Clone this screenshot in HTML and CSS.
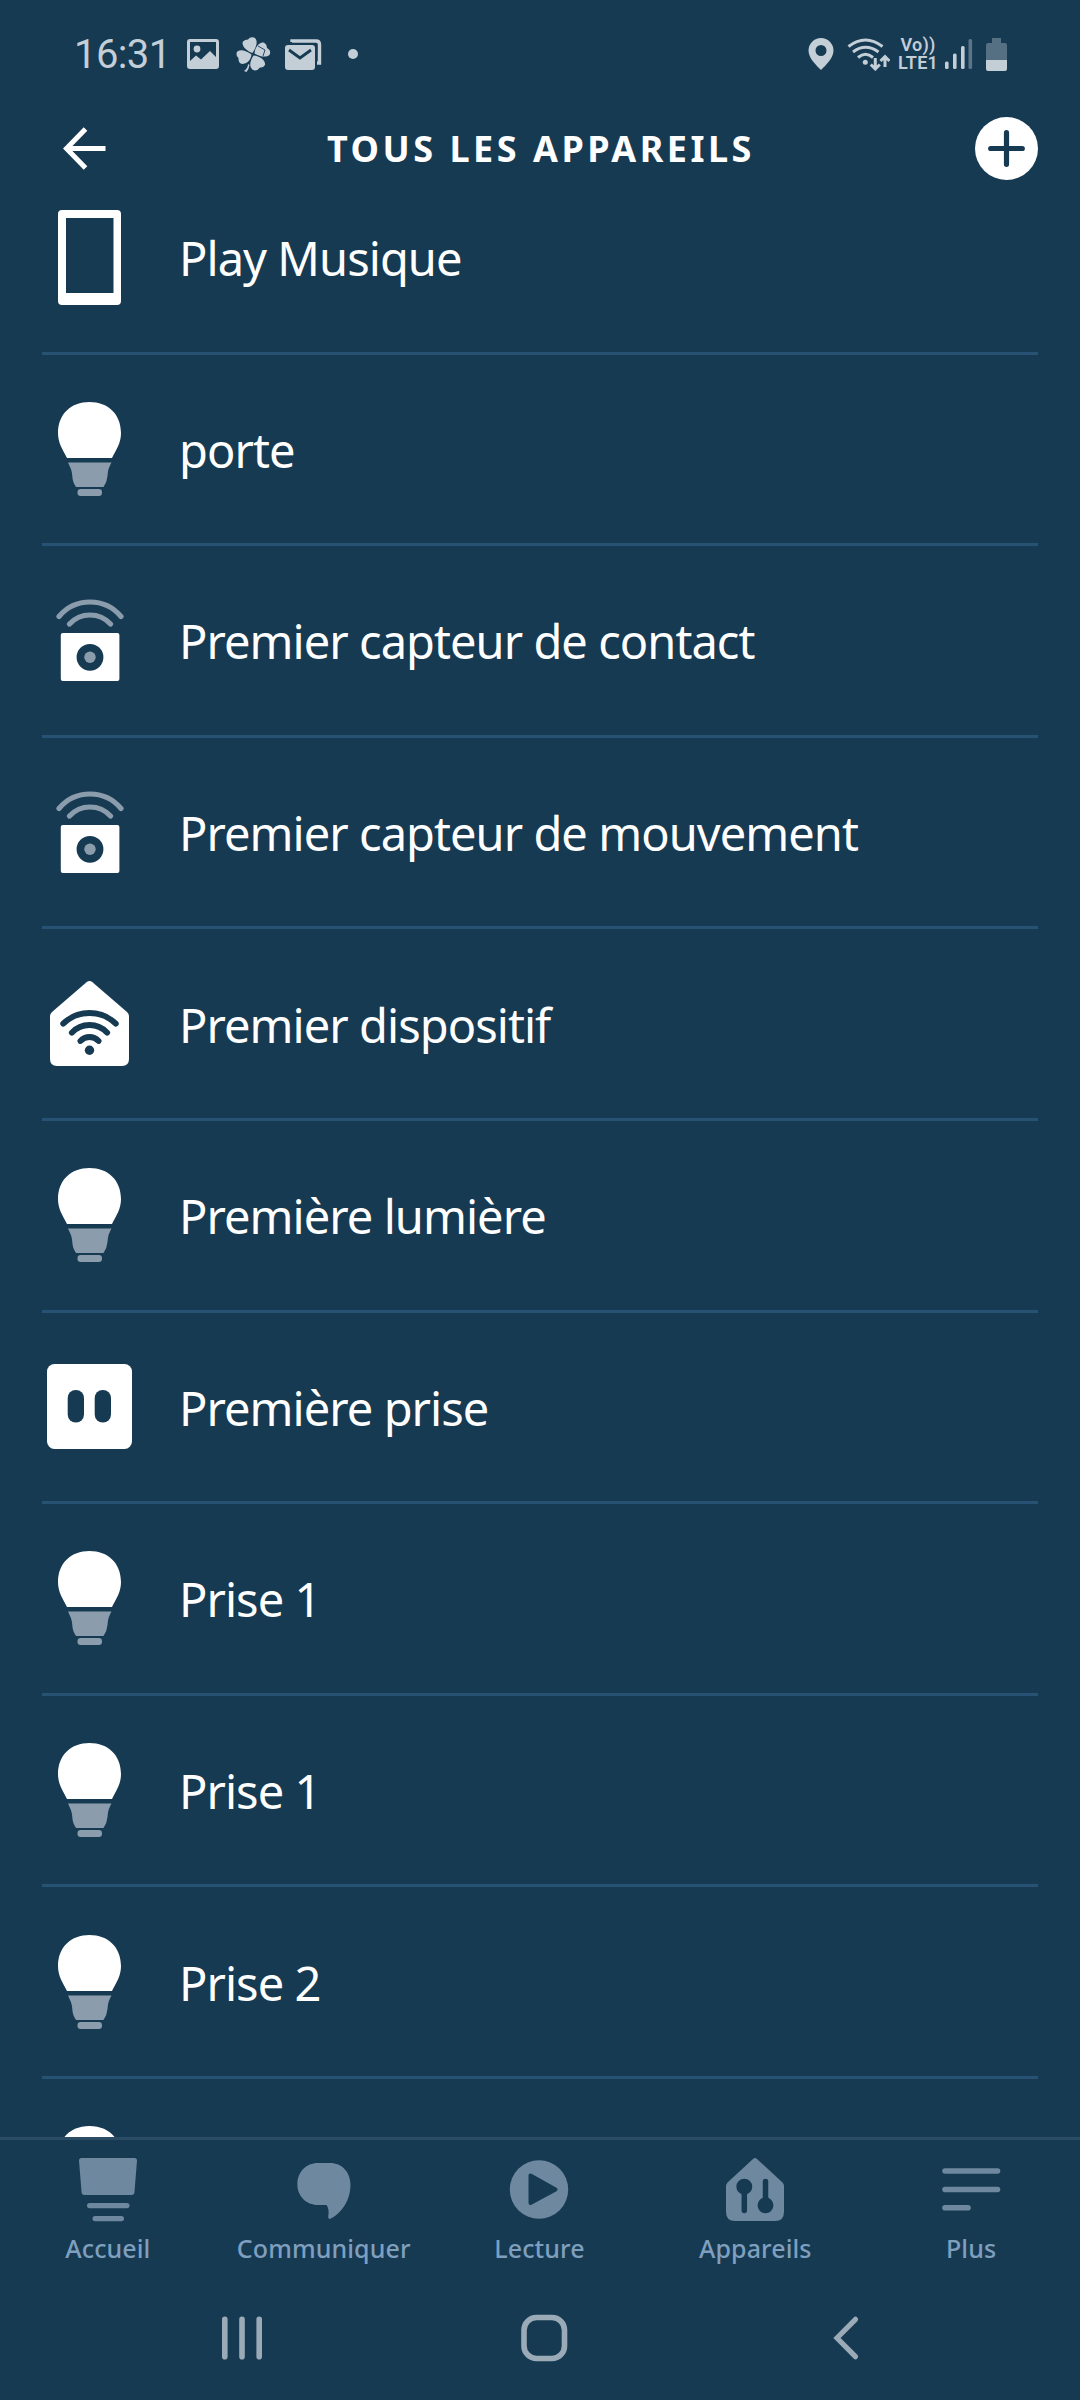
FILE: index.html
```
<!DOCTYPE html>
<html lang="fr">
  <head>
    <meta charset="UTF-8" />
    <meta name="viewport" content="width=device-width, initial-scale=1.0" />
    <title>Tous les appareils</title>
    <link rel="stylesheet" href="styles.css" />
  </head>
  <body>
    <!-- Shared device icons -->
    <svg class="sprite" width="0" height="0">
      <symbol id="bulb" viewBox="0 0 63 94">
        <path fill="#fff" d="M31.500 0C50 0 63 12 63 31C63 41 58.500 47 54 56H9C4.500 47 0 41 0 31C0 12 13 0 31.500 0Z" />
        <path fill="#8b9dac" d="M10 60.500H53.500C50 67 50 69 49.500 74Q49 80 45.500 85H18Q14.500 80 14.300 74C14 69 13 67 10 60.500Z" />
        <rect fill="#8b9dac" x="19.500" y="87" width="24.500" height="7" rx="3.200" />
      </symbol>
      <symbol id="sensor" viewBox="0 0 68 82">
        <g fill="none" stroke="#8b9dac" stroke-width="5.200" stroke-linecap="round">
          <path d="M3 17.500A40.400 40.400 0 0 1 65 17.500" />
          <path d="M13.500 25A27.800 27.800 0 0 1 54.500 25" />
        </g>
        <rect fill="#fff" x="4.800" y="34" width="58.600" height="48" rx="2" />
        <circle fill="#173a53" cx="34" cy="58.300" r="13.400" />
        <circle fill="#8b9dac" cx="34" cy="58.300" r="5.700" />
      </symbol>
    </svg>

    <div class="phone">
      <div class="status-bar">
        <div class="status-left">
          <span class="clock">16:31</span>
          <svg class="ic-image" width="32" height="30" viewBox="0 0 32 30">
            <path fill="#c3ced7" fill-rule="evenodd" d="M3 0H29Q32 0 32 3V27Q32 30 29 30H3Q0 30 0 27V3Q0 0 3 0ZM3 3V22L9 16.500L14 20.500L23 12L29 18V3Z" />
            <circle fill="#c3ced7" cx="10" cy="10" r="3.400" />
          </svg>
          <svg class="ic-clover" width="35" height="35" viewBox="0 0 35 35">
            <g fill="#c3ced7">
              <path d="M16.500 16C10 14 5 8 7 4.500Q9 2.500 12 2.500Q14-.5 18 .5C23 3 20 11 16.500 16Z" />
              <path d="M18.500 16.500C19 10 24 4 28.500 6Q31 7.500 31 11Q35 13 34 17C32 21 24 20 18.500 16.500Z" />
              <path d="M15.500 17.500C10 13 2 11.500 .5 16Q0 19 2.500 21Q2 26 6 27C11 27 15 23 15.500 17.500Z" />
              <path d="M17.500 18.500C23 19 30 23 29 28Q27 31 24 30.500Q21 34.500 17 33C12.500 30 14 24 17.500 18.500Z" />
              <path d="M12 27Q12 31 8 34L10.500 35Q13 32 13.500 28Z" />
            </g>
            <path fill="none" stroke="#173a53" stroke-width=".9" d="M22 9L29 13L27 19" />
          </svg>
          <svg class="ic-mail" width="37" height="31" viewBox="0 0 37 31">
            <path fill="none" stroke="#c3ced7" stroke-width="3.400" d="M7 3V2H31Q34.500 2 34.500 5.500V24H32" />
            <rect fill="#c3ced7" x="0" y="6" width="30" height="25" rx="3" />
            <path fill="none" stroke="#173a53" stroke-width="2.800" d="M4 11L15 19L26 11" />
          </svg>
          <span class="dot"></span>
        </div>
        <div class="status-right">
          <svg width="26" height="32" viewBox="0 0 26 32">
            <path fill="#c3ced7" fill-rule="evenodd" d="M13 0A12.500 12.500 0 0 1 25.500 12.500C25.500 20 18 27 13 32C8 27 .5 20 .5 12.500A12.500 12.500 0 0 1 13 0ZM13 7A5.500 5.500 0 1 0 13 18A5.500 5.500 0 1 0 13 7Z" />
          </svg>
          <svg class="ic-wifi" width="43" height="33" viewBox="0 0 43 33">
            <g fill="none" stroke="#c3ced7" stroke-width="3">
              <path d="M1.500 8.500Q18.500-4.500 35.500 8.500" />
              <path d="M6 14Q18.500 4.500 31.500 14" />
              <path d="M11 19.500Q18.500 13 26 19.500" />
              <path d="M28.300 20V31M23.800 26.500L28.300 31L32.800 26.500" />
              <path d="M38 29V18.500M33.500 23L38 18.500L42.500 23" />
            </g>
            <circle fill="#c3ced7" cx="18.300" cy="24.300" r="2.500" />
          </svg>
          <div class="volte">
            <span>Vo))</span>
            <span>LTE1</span>
          </div>
          <svg class="ic-signal" width="28" height="30" viewBox="0 0 28 30">
            <g fill="#c3ced7">
              <rect x="0" y="22.500" width="3.600" height="7.500" rx="1.500" />
              <rect x="8" y="14.500" width="3.600" height="15.500" rx="1.500" />
              <rect x="16" y="7" width="3.600" height="23" rx="1.500" />
              <rect x="23.500" y="0" width="3.600" height="30" rx="1.500" opacity=".4" />
            </g>
          </svg>
          <svg class="ic-battery" width="21" height="33" viewBox="0 0 21 33">
            <path fill="#556f83" d="M6 0H15V5H19Q21 5 21 7V22H0V7Q0 5 2 5H6Z" />
            <path fill="#c3ced7" d="M0 22H21V31Q21 33 19 33H2Q0 33 0 31Z" />
          </svg>
        </div>
      </div>

      <header class="header">
        <svg class="back" width="43" height="43" viewBox="0 0 43 43">
          <path fill="none" stroke="#fff" stroke-width="5" d="M22.500 2L3.500 21.500L22.500 41M3.500 21.500H42.500" />
        </svg>
        <h1>TOUS LES APPAREILS</h1>
        <svg class="add" width="63" height="63" viewBox="0 0 63 63">
          <circle fill="#fff" cx="31.500" cy="31.500" r="31.500" />
          <path stroke="#173a53" stroke-width="5.200" stroke-linecap="round" d="M15.700 31.500H47.300M31.500 15.700V47.300" />
        </svg>
      </header>

      <main class="list">
        <div class="row">
          <div class="icon">
            <svg width="63" height="95" viewBox="0 0 63 95">
              <path fill="#fff" fill-rule="evenodd" d="M4 0H59Q63 0 63 4V91Q63 95 59 95H4Q0 95 0 91V4Q0 0 4 0ZM8 8V83H55.500V8Z" />
            </svg>
          </div>
          <span class="name">Play Musique</span>
        </div>
        <div class="row">
          <div class="icon"><svg width="63" height="94"><use href="#bulb" /></svg></div>
          <span class="name">porte</span>
        </div>
        <div class="row">
          <div class="icon"><svg width="68" height="82"><use href="#sensor" /></svg></div>
          <span class="name">Premier capteur de contact</span>
        </div>
        <div class="row">
          <div class="icon"><svg width="68" height="82"><use href="#sensor" /></svg></div>
          <span class="name">Premier capteur de mouvement</span>
        </div>
        <div class="row">
          <div class="icon">
            <svg width="79" height="85" viewBox="0 0 79 85">
              <path fill="#fff" d="M36.500 1.200Q39.500-1.200 42.500 1.200L77 31Q79 33 79 35V78Q79 85 72 85H7Q0 85 0 78V35Q0 33 2 31Z" />
              <g fill="none" stroke="#173a53" stroke-width="5.800" stroke-linecap="round">
                <path d="M13.200 42.700A37.700 37.700 0 0 1 65.800 42.700" />
                <path d="M21.800 51.700A24.200 24.200 0 0 1 57.200 51.700" />
                <path d="M30.400 60A12.400 12.400 0 0 1 48.600 60" />
              </g>
              <circle fill="#173a53" cx="39.500" cy="69.300" r="4.700" />
            </svg>
          </div>
          <span class="name">Premier dispositif</span>
        </div>
        <div class="row">
          <div class="icon"><svg width="63" height="94"><use href="#bulb" /></svg></div>
          <span class="name">Première lumière</span>
        </div>
        <div class="row">
          <div class="icon">
            <svg width="85" height="85" viewBox="0 0 85 85">
              <rect fill="#fff" width="85" height="85" rx="7.500" />
              <rect fill="#173a53" x="20.700" y="26" width="16.300" height="32.500" rx="8" />
              <rect fill="#173a53" x="47.700" y="26" width="16.300" height="32.500" rx="8" />
            </svg>
          </div>
          <span class="name">Première prise</span>
        </div>
        <div class="row">
          <div class="icon"><svg width="63" height="94"><use href="#bulb" /></svg></div>
          <span class="name">Prise 1</span>
        </div>
        <div class="row">
          <div class="icon"><svg width="63" height="94"><use href="#bulb" /></svg></div>
          <span class="name">Prise 1</span>
        </div>
        <div class="row">
          <div class="icon"><svg width="63" height="94"><use href="#bulb" /></svg></div>
          <span class="name">Prise 2</span>
        </div>
        <div class="row">
          <div class="icon"><svg width="63" height="94"><use href="#bulb" /></svg></div>
        </div>
      </main>

      <nav class="tabs">
        <div class="tab">
          <svg width="64" height="64" viewBox="0 0 64 64">
            <g fill="#6d889f">
              <path d="M5.500 0H58.500Q61 0 61 2.500L58.500 34Q58.300 37 55.500 37H8.500Q5.700 37 5.500 34L3 2.500Q3 0 5.500 0Z" />
              <rect x="11" y="45" width="42.500" height="5.200" rx="2.600" />
              <rect x="16.500" y="58" width="31.500" height="5.200" rx="2.600" />
            </g>
          </svg>
          <span>Accueil</span>
        </div>
        <div class="tab">
          <svg width="64" height="64" viewBox="0 0 64 64">
            <path fill="#6d889f" d="M26 5H38C50 5 58.500 14 58.500 27C58.500 43 49 55 39 60.500Q36 62 36.200 58.500Q37.500 51 34.500 47H26C14 47 5.400 38 5.400 26.500C5.400 14 14 5 26 5Z" />
          </svg>
          <span>Communiquer</span>
        </div>
        <div class="tab">
          <svg width="64" height="64" viewBox="0 0 64 64">
            <circle fill="#6d889f" cx="32" cy="31.500" r="29.200" />
            <path fill="#173a53" stroke="#173a53" stroke-width="4" stroke-linejoin="round" d="M23.500 17.500V45L48.500 31.500Z" />
          </svg>
          <span>Lecture</span>
        </div>
        <div class="tab">
          <svg width="64" height="64" viewBox="0 0 64 64">
            <path fill="#6d889f" d="M30 1Q32-1 34 1L59.500 24.500Q61 26 61 28V54Q61 63 52 63H12Q3 63 3 54V28Q3 26 4.500 24.500Z" />
            <g fill="#173a53" stroke="#173a53" stroke-width="5.500" stroke-linecap="round">
              <path d="M21.300 30V52.500M42.500 23.500V47" />
              <circle cx="21.300" cy="28.700" r="5.200" />
              <circle cx="42.500" cy="47.300" r="5.200" />
            </g>
          </svg>
          <span>Appareils</span>
        </div>
        <div class="tab">
          <svg width="64" height="64" viewBox="0 0 64 64">
            <path stroke="#6d889f" stroke-width="5.600" stroke-linecap="round" d="M6 13H58.500M6 31.500H58.500M6 49.800H29" />
          </svg>
          <span>Plus</span>
        </div>
      </nav>

      <div class="system-nav">
        <svg width="48" height="48" viewBox="0 0 48 48">
          <path stroke="#9aaab6" stroke-width="5.600" stroke-linecap="round" d="M6.800 5.300V42.700M24 5.300V42.700M41.200 5.300V42.700" />
        </svg>
        <svg width="48" height="48" viewBox="0 0 48 48">
          <rect fill="none" stroke="#9aaab6" stroke-width="5.600" x="4" y="3.500" width="40.500" height="41" rx="12.500" />
        </svg>
        <svg width="48" height="48" viewBox="0 0 48 48">
          <path fill="none" stroke="#9aaab6" stroke-width="5.200" stroke-linecap="round" d="M33.500 5.300L15 24L33.500 42.700" />
        </svg>
      </div>
    </div>
  </body>
</html>
```

FILE: styles.css
```
* {
  box-sizing: border-box;
}

body {
  margin: 0;
  background: #173a53;
  color: #fff;
  font-family: "Noto Sans", "Open Sans", sans-serif;
}

svg {
  display: block;
  flex-shrink: 0;
}

.sprite {
  display: none;
}

.phone {
  display: flex;
  flex-direction: column;
  width: 1080px;
  height: 2400px;
  overflow: hidden;
}

/* ===== Status bar ===== */
.status-bar {
  display: flex;
  justify-content: space-between;
  height: 108px;
  padding: 0 73px 0 74px;
  color: #c3ced7;
  font-family: Roboto, sans-serif;
}

.status-left,
.status-right {
  display: flex;
  align-items: center;
  height: 108px;
}

.clock {
  width: 113px;
  padding-top: 2px;
  font-size: 40px;
  line-height: 46px;
  letter-spacing: -0.6px;
}

.ic-clover {
  margin-left: 17px;
}

.ic-mail {
  margin-left: 14px;
}

.dot {
  width: 10px;
  height: 10px;
  margin-left: 26px;
  border-radius: 50%;
  background: #c3ced7;
}

.ic-wifi {
  margin-left: 13px;
}

.volte {
  display: flex;
  flex-direction: column;
  align-items: center;
  width: 42px;
  margin-left: 7px;
  font-size: 18px;
  font-weight: 600;
  line-height: 18px;
  letter-spacing: 0.2px;
}

.ic-signal {
  margin-left: 6px;
}

.ic-battery {
  margin-left: 13px;
}

/* ===== Header ===== */
.header {
  display: flex;
  align-items: center;
  justify-content: space-between;
  height: 81px;
  padding: 0 42px 0 63px;
}

.header h1 {
  margin: 0;
  padding-left: 1px;
  font-size: 36px;
  font-weight: 700;
  line-height: 50px;
  letter-spacing: 3.5px;
}

/* ===== Device list ===== */
.list {
  flex: 1;
  min-height: 0;
  padding: 0 42px;
  overflow: hidden;
}

.row {
  display: flex;
  align-items: center;
  height: 191.6px;
  border-bottom: 3px solid #285273;
}

.row:first-child {
  margin-top: -26px;
}

.icon {
  display: flex;
  justify-content: center;
  width: 95px;
  margin-right: 42px;
}

.name {
  padding-top: 2px;
  font-size: 47px;
  line-height: 64px;
  letter-spacing: -0.95px;
  white-space: nowrap;
}

/* ===== Bottom tabs ===== */
.tabs {
  display: flex;
  height: 138px;
  padding-right: 1px;
  border-top: 3px solid #2c4c65;
}

.tab {
  display: flex;
  flex: 1;
  flex-direction: column;
  align-items: center;
  padding-top: 18px;
  color: #7f9fbe;
  font-size: 25px;
  font-weight: 500;
  line-height: 34px;
}

.tab span {
  margin-top: 9px;
  letter-spacing: 0.1px;
}

/* ===== Android buttons ===== */
.system-nav {
  display: grid;
  grid-template-columns: repeat(3, 302px);
  place-items: center;
  height: 125px;
  padding-left: 91px;
}
```
